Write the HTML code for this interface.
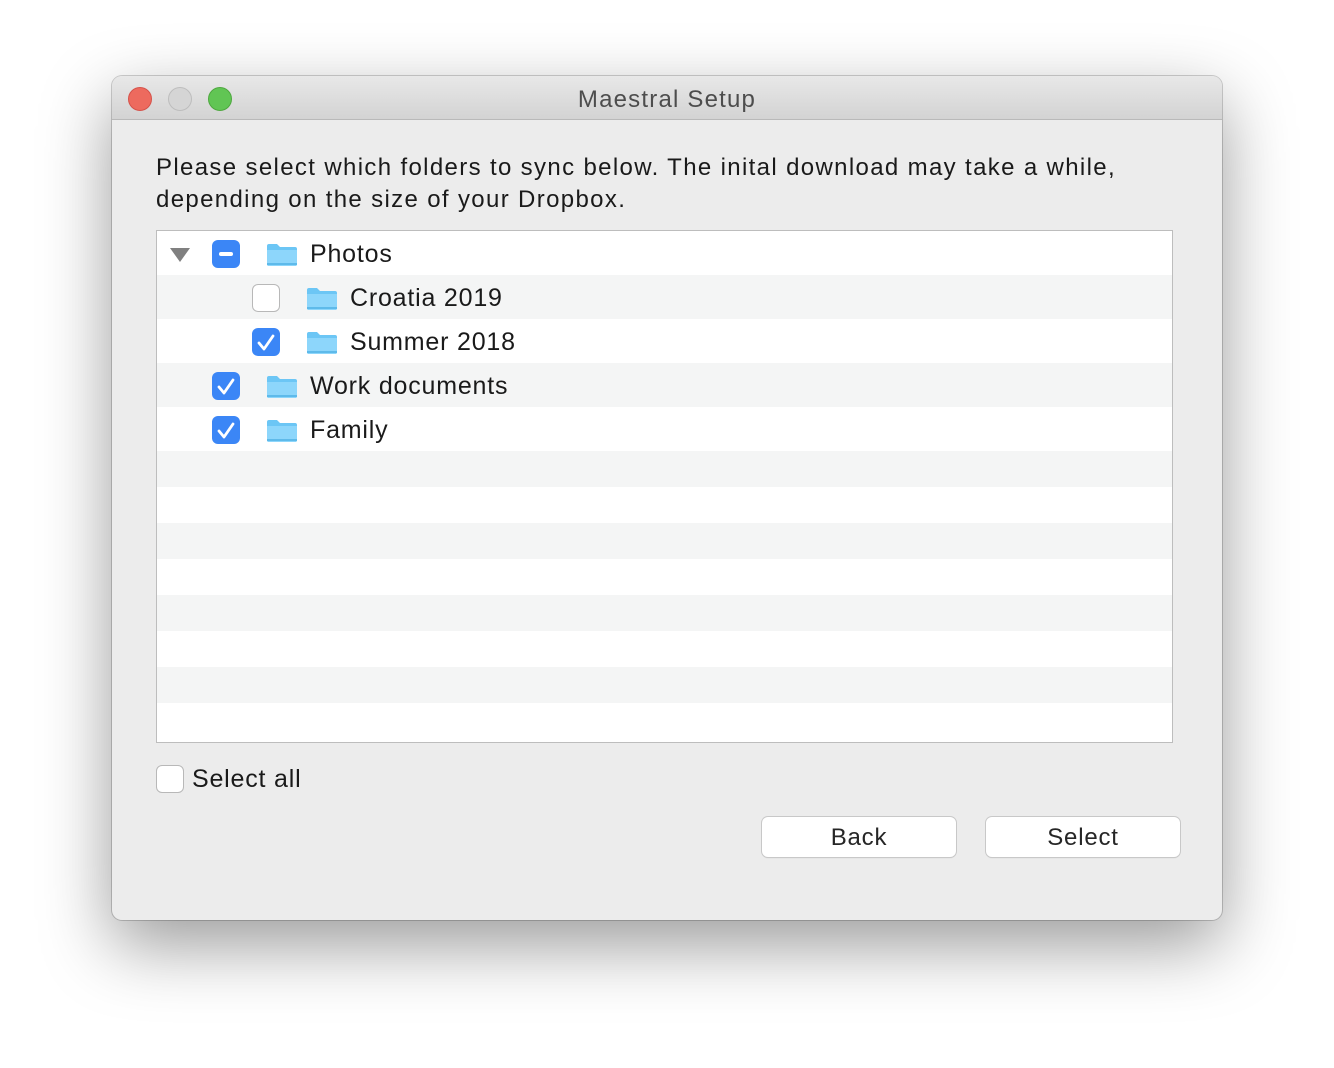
<!DOCTYPE html>
<html><head><style>
*{margin:0;padding:0;box-sizing:border-box}
body{width:1334px;height:1068px;background:#fff;font-family:"Liberation Sans",sans-serif;position:relative;overflow:hidden}
.win{position:absolute;left:112px;top:76px;width:1110px;height:844px;background:#ececec;border-radius:10px;box-shadow:0 25px 70px rgba(0,0,0,.4),0 0 0 1px rgba(0,0,0,.18);overflow:hidden}
.title{position:absolute;left:0;top:0;width:100%;height:44px;background:linear-gradient(#e8e8e8,#d3d3d3);border-bottom:1px solid #b9b9b9;text-align:center;line-height:48px;font-size:24px;letter-spacing:1.2px;color:#4d4d4d}
.dot{position:absolute;top:11px;width:24px;height:24px;border-radius:50%}
.a{position:absolute;white-space:nowrap;color:#1a1a1a;letter-spacing:0.8px}
.table{position:absolute;left:44px;top:154px;width:1017px;height:513px;background:#fff;border:1px solid #bdbdbd}
.r{position:absolute;left:0;width:100%}
.g{background:#f4f5f5}
.cb{position:absolute;width:28px;height:28px;border-radius:6px}
.on{background:#3b86f6}
.off{background:#fff;border:1px solid #b8b8b8}
.btn{position:absolute;top:741px;width:194px;height:40px;background:#fff;border-radius:6px;box-shadow:0 0 0 1px #c8c8c8,0 1px 1px rgba(0,0,0,.15);text-align:center;line-height:42px;font-size:24px;letter-spacing:0.8px;color:#262626}
</style></head><body>
<div class="win">
<div class="title">Maestral Setup
<div class="dot" style="left:16px;background:#ed6a5e;border:1px solid #d5524a"></div>
<div class="dot" style="left:56px;background:#d5d5d5;border:1px solid #bdbdbd"></div>
<div class="dot" style="left:96px;background:#61c554;border:1px solid #4ea83f"></div>
</div>
<div class="a" style="left:44px;top:76px;font-size:24px;line-height:32px;letter-spacing:1.35px">Please select which folders to sync below. The inital download may take a while,<br>depending on the size of your Dropbox.</div>
<div class="table">
<div class="r g" style="top:44px;height:44px"></div>
<div class="r g" style="top:132px;height:44px"></div>
<div class="r g" style="top:220px;height:36px"></div>
<div class="r g" style="top:292px;height:36px"></div>
<div class="r g" style="top:364px;height:36px"></div>
<div class="r g" style="top:436px;height:36px"></div>
</div>
<svg style="position:absolute;left:0;top:0" width="1110" height="844">
<path d="M58 172h20l-10 14z" fill="#808080"/>
<defs><g id="f"><path d="M0 4a2 2 0 0 1 2-2h8l3 3h15a2 2 0 0 1 2 2v15a2 2 0 0 1-2 2H2a2 2 0 0 1-2-2z" fill="#6cc6f5"/><path d="M0 8h30v14a2 2 0 0 1-2 2H2a2 2 0 0 1-2-2z" fill="#8dd6fb"/><path d="M0 22h30" stroke="#4fb0e4" stroke-width="1.5"/></g></defs>
<use href="#f" x="155" y="166"/><use href="#f" x="195" y="210"/><use href="#f" x="195" y="254"/><use href="#f" x="155" y="298"/><use href="#f" x="155" y="342"/>
</svg>
<div class="cb on" style="left:100px;top:164px"><div style="position:absolute;left:7px;top:12px;width:14px;height:4px;border-radius:2px;background:#fff"></div></div>
<div class="cb off" style="left:140px;top:208px"></div>
<div class="cb on" style="left:140px;top:252px"></div>
<div class="cb on" style="left:100px;top:296px"></div>
<div class="cb on" style="left:100px;top:340px"></div>
<svg style="position:absolute;left:0;top:0" width="1110" height="844" fill="none" stroke="#fff" stroke-width="2.8" stroke-linecap="round" stroke-linejoin="round">
<path d="M147 267l5 6 9-13"/><path d="M107 311l5 6 9-13"/><path d="M107 355l5 6 9-13"/>
</svg>
<div class="a" style="left:198px;top:164px;font-size:25px">Photos</div>
<div class="a" style="left:238px;top:208px;font-size:25px">Croatia 2019</div>
<div class="a" style="left:238px;top:252px;font-size:25px">Summer 2018</div>
<div class="a" style="left:198px;top:296px;font-size:25px">Work documents</div>
<div class="a" style="left:198px;top:340px;font-size:25px">Family</div>
<div class="cb off" style="left:44px;top:689px"></div>
<div class="a" style="left:80px;top:689px;font-size:25px">Select all</div>
<div class="btn" style="left:650px">Back</div>
<div class="btn" style="left:874px">Select</div>
</div>
</body></html>
